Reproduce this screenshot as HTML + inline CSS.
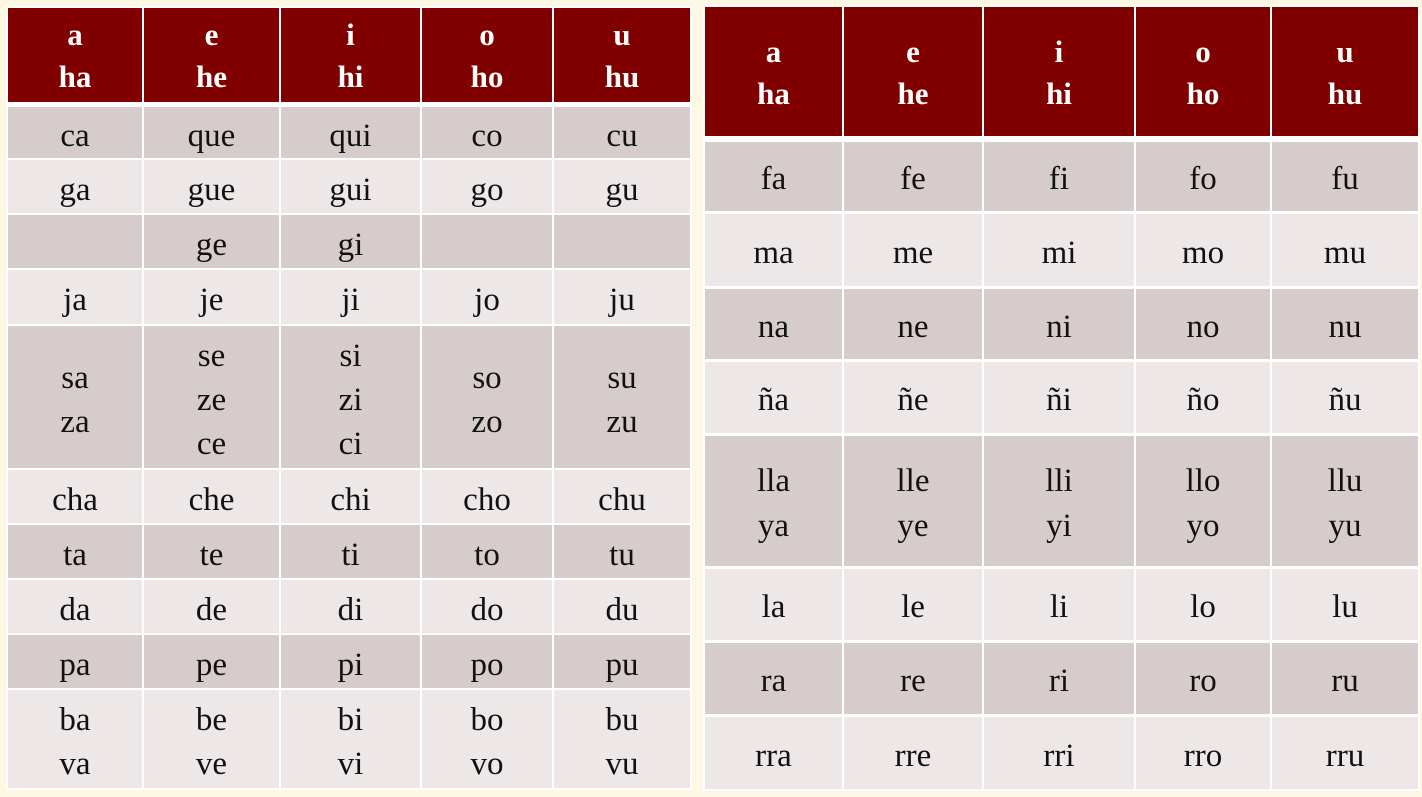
<!DOCTYPE html>
<html><head><meta charset="utf-8"><style>
body{margin:0;width:1422px;height:797px;background:#fdf8e4;position:relative;overflow:hidden;font-family:"Liberation Serif",serif;}
.t{position:absolute;background:#fff;display:grid;gap:2px;padding:2px;}
.t div{display:flex;align-items:center;justify-content:center;text-align:center;color:#111;font-size:33px;line-height:44px;padding-top:6px;box-sizing:border-box;}
.t div.h{background:#800000;color:#fff;font-weight:bold;font-size:31px;line-height:42px;padding-top:2px;}
.t div.s{background:none;padding:0;}
.o{background:#d7cccc;}.e{background:#ede7e7;}
#L{left:6px;top:6px;grid-template-columns:134px 135px 139px 130px 136px;grid-template-rows:94px 1px 51px 53px 53px 54px 142px 53px 53px 53px 53px 98px;}
#R{left:703px;top:5px;row-gap:3px;grid-template-columns:137px 138px 150px 134px 146px;grid-template-rows:129px 0px 69px 72px 70px 71px 130px 71px 71px 72px;}
#R div{line-height:45px;}
#R div.h{line-height:42px;}
</style></head><body>
<div class="t" id="L">
<div class="h">a<br>ha</div><div class="h">e<br>he</div><div class="h">i<br>hi</div><div class="h">o<br>ho</div><div class="h">u<br>hu</div>
<div class="s"></div><div class="s"></div><div class="s"></div><div class="s"></div><div class="s"></div>
<div class="o">ca</div><div class="o">que</div><div class="o">qui</div><div class="o">co</div><div class="o">cu</div>
<div class="e">ga</div><div class="e">gue</div><div class="e">gui</div><div class="e">go</div><div class="e">gu</div>
<div class="o"></div><div class="o">ge</div><div class="o">gi</div><div class="o"></div><div class="o"></div>
<div class="e">ja</div><div class="e">je</div><div class="e">ji</div><div class="e">jo</div><div class="e">ju</div>
<div class="o">sa<br>za</div><div class="o">se<br>ze<br>ce</div><div class="o">si<br>zi<br>ci</div><div class="o">so<br>zo</div><div class="o">su<br>zu</div>
<div class="e">cha</div><div class="e">che</div><div class="e">chi</div><div class="e">cho</div><div class="e">chu</div>
<div class="o">ta</div><div class="o">te</div><div class="o">ti</div><div class="o">to</div><div class="o">tu</div>
<div class="e">da</div><div class="e">de</div><div class="e">di</div><div class="e">do</div><div class="e">du</div>
<div class="o">pa</div><div class="o">pe</div><div class="o">pi</div><div class="o">po</div><div class="o">pu</div>
<div class="e">ba<br>va</div><div class="e">be<br>ve</div><div class="e">bi<br>vi</div><div class="e">bo<br>vo</div><div class="e">bu<br>vu</div>
</div>
<div class="t" id="R">
<div class="h">a<br>ha</div><div class="h">e<br>he</div><div class="h">i<br>hi</div><div class="h">o<br>ho</div><div class="h">u<br>hu</div>
<div class="s"></div><div class="s"></div><div class="s"></div><div class="s"></div><div class="s"></div>
<div class="o">fa</div><div class="o">fe</div><div class="o">fi</div><div class="o">fo</div><div class="o">fu</div>
<div class="e">ma</div><div class="e">me</div><div class="e">mi</div><div class="e">mo</div><div class="e">mu</div>
<div class="o">na</div><div class="o">ne</div><div class="o">ni</div><div class="o">no</div><div class="o">nu</div>
<div class="e">ña</div><div class="e">ñe</div><div class="e">ñi</div><div class="e">ño</div><div class="e">ñu</div>
<div class="o">lla<br>ya</div><div class="o">lle<br>ye</div><div class="o">lli<br>yi</div><div class="o">llo<br>yo</div><div class="o">llu<br>yu</div>
<div class="e">la</div><div class="e">le</div><div class="e">li</div><div class="e">lo</div><div class="e">lu</div>
<div class="o">ra</div><div class="o">re</div><div class="o">ri</div><div class="o">ro</div><div class="o">ru</div>
<div class="e">rra</div><div class="e">rre</div><div class="e">rri</div><div class="e">rro</div><div class="e">rru</div>
</div>
</body></html>
